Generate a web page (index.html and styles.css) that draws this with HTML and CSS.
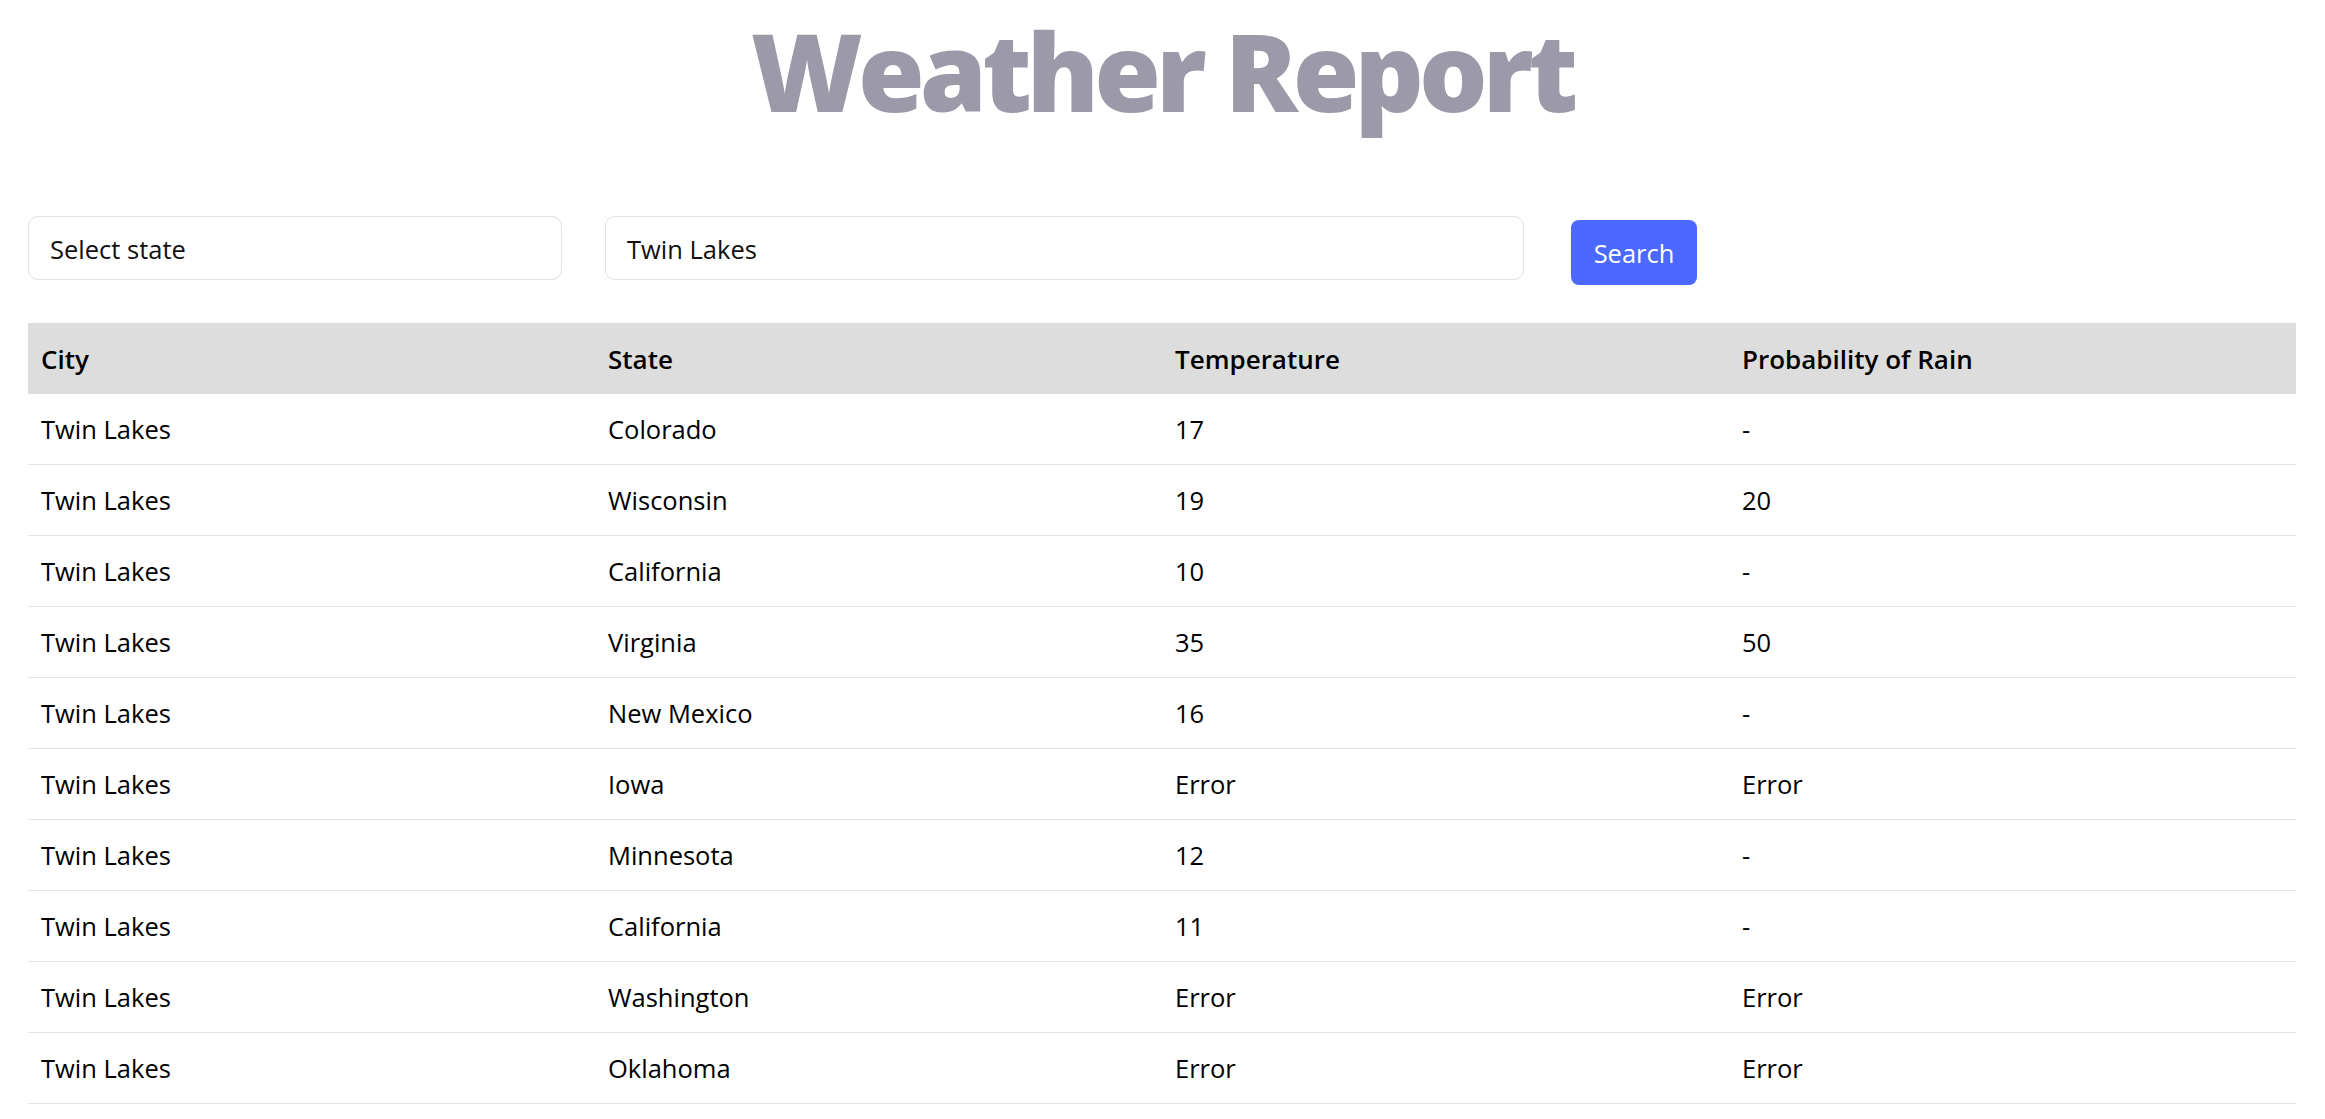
FILE: index.html
```html
<!DOCTYPE html>
<html lang="en">
<head>
<meta charset="utf-8">
<title>Weather Report</title>
<link rel="stylesheet" href="styles.css">
</head>
<body>
<div class="page">
  <h1 class="title">Weather Report</h1>
  <div class="filters">
    <div class="field select-field">Select state</div>
    <div class="field text-field">Twin Lakes</div>
    <button class="search-btn">Search</button>
  </div>
  <table class="weather">
    <thead>
      <tr><th>City</th><th>State</th><th>Temperature</th><th>Probability of Rain</th></tr>
    </thead>
    <tbody>
      <tr><td>Twin Lakes</td><td>Colorado</td><td>17</td><td>-</td></tr>
      <tr><td>Twin Lakes</td><td>Wisconsin</td><td>19</td><td>20</td></tr>
      <tr><td>Twin Lakes</td><td>California</td><td>10</td><td>-</td></tr>
      <tr><td>Twin Lakes</td><td>Virginia</td><td>35</td><td>50</td></tr>
      <tr><td>Twin Lakes</td><td>New Mexico</td><td>16</td><td>-</td></tr>
      <tr><td>Twin Lakes</td><td>Iowa</td><td>Error</td><td>Error</td></tr>
      <tr><td>Twin Lakes</td><td>Minnesota</td><td>12</td><td>-</td></tr>
      <tr><td>Twin Lakes</td><td>California</td><td>11</td><td>-</td></tr>
      <tr><td>Twin Lakes</td><td>Washington</td><td>Error</td><td>Error</td></tr>
      <tr><td>Twin Lakes</td><td>Oklahoma</td><td>Error</td><td>Error</td></tr>
    </tbody>
  </table>
</div>
</body>
</html>
```

FILE: styles.css
```css
html, body {
  margin: 0;
  padding: 0;
  background: #ffffff;
}
body {
  font-family: "Open Sans", "Noto Sans", sans-serif;
  color: #000;
}
.page {
  padding: 0 29px 0 28px;
}
.title {
  margin: 0;
  padding-top: 1px;
  height: 216px;
  box-sizing: border-box;
  text-align: center;
  font-size: 108px;
  line-height: 140px;
  font-weight: 800;
  color: #9c9aa8;
  letter-spacing: -5px;
}
.filters {
  display: flex;
  align-items: flex-start;
  height: 64px;
  margin-bottom: 43px;
}
.field {
  box-sizing: border-box;
  height: 64px;
  border: 1px solid #e0e0e6;
  border-radius: 10px;
  padding: 2px 21px 0;
  display: flex;
  align-items: center;
  font-size: 25.5px;
  color: #111;
}
.select-field {
  width: 534px;
}
.text-field {
  width: 919px;
  margin-left: 43px;
}
.search-btn {
  margin-left: 47px;
  margin-top: 4px;
  width: 126px;
  height: 65px;
  border: none;
  border-radius: 8px;
  background: #4b69ff;
  color: #fff;
  font-family: "Open Sans", "Noto Sans", sans-serif;
  font-size: 25.5px;
  padding: 0;
}
.weather {
  width: 100%;
  border-collapse: collapse;
  table-layout: fixed;
  font-size: 25.5px;
}
.weather th {
  background: #dddddd;
  height: 71px;
  padding: 0 13px;
  text-align: left;
  font-weight: 600;
  font-size: 26px;
  box-sizing: border-box;
}
.weather td {
  height: 70px;
  padding: 0 13px;
  border-bottom: 1px solid #e4e4e4;
}
```
